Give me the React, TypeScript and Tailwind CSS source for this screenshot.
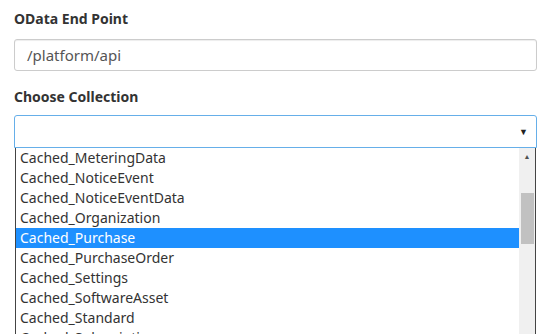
import React from 'react';

const collections = [
  'Cached_MeteringData',
  'Cached_NoticeEvent',
  'Cached_NoticeEventData',
  'Cached_Organization',
  'Cached_Purchase',
  'Cached_PurchaseOrder',
  'Cached_Settings',
  'Cached_SoftwareAsset',
  'Cached_Standard',
  'Cached_Subscription',
];

const selected = 'Cached_Purchase';

export default function App() {
  return (
    <div className="h-[334px] overflow-hidden bg-white pl-[14px] pr-[16px] pt-[9px] font-['Noto_Sans',sans-serif] text-[#333]">
      <label className="block text-[14px] font-bold leading-[20px]">OData End Point</label>
      <div className="mt-[10px] flex h-[32px] items-center rounded-[3px] border border-[#ccc] px-[12px] text-[15px] text-[#555] shadow-[inset_0_1px_1px_rgba(0,0,0,0.075)]">
        /platform/api
      </div>

      <label className="mt-[16px] block text-[14px] font-bold leading-[20px]">Choose Collection</label>
      <div className="mt-[8px] flex h-[33px] items-center justify-end rounded-t-[3px] border border-[#66afe9] pr-[8px]">
        <span className="text-[9px] leading-none text-[#222]">▼</span>
      </div>

      <div className="mx-[1px] flex border-x border-[#444]">
        <ul className="flex-1">
          {collections.map(name => (
            <li
              key={name}
              className={`h-[20px] pl-[4px] text-[14px] leading-[20px] ${name === selected ? 'bg-[#1e90ff] text-white' : 'text-[#333]'}`}
            >
              {name}
            </li>
          ))}
        </ul>
        <div className="flex w-[16px] flex-col items-center bg-[#f0f0f0]">
          <span className="mt-[5px] text-[7px] leading-none text-[#505050]">▲</span>
          <div className="mt-[33px] h-[51px] w-[13px] bg-[#c1c1c1]" />
        </div>
      </div>
    </div>
  );
}
